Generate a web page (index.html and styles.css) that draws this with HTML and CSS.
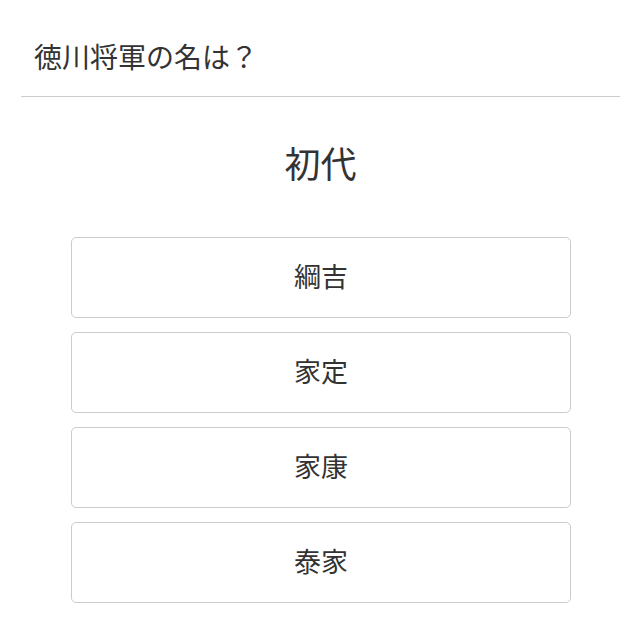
FILE: index.html
```html
<!DOCTYPE html>
<html lang="ja">
<head>
<meta charset="utf-8">
<title>徳川将軍</title>
<link rel="stylesheet" href="styles.css">
</head>
<body>
<div class="quiz">
  <div class="quiz-head">徳川将軍の名は？</div>
  <div class="quiz-question">初代</div>
  <div class="quiz-choices">
    <button class="choice">綱吉</button>
    <button class="choice">家定</button>
    <button class="choice">家康</button>
    <button class="choice">泰家</button>
  </div>
</div>
</body>
</html>
```

FILE: styles.css
```css
body {
  margin: 0;
  background: #fff;
  color: #333;
  font-family: "Noto Sans CJK JP", "Noto Sans", sans-serif;
}

.quiz {
  margin: 0 20px 0 21px;
}

.quiz-head {
  padding: 36px 0 20px 13px;
  font-size: 28px;
  line-height: 40px;
  border-bottom: 1px solid #ccc;
}

.quiz-question {
  margin-top: 40px;
  text-align: center;
  font-size: 36px;
  line-height: 50px;
}

.quiz-choices {
  display: flex;
  flex-direction: column;
  align-items: center;
  gap: 14px;
  margin-top: 50px;
  margin-right: -1px;
}

.choice {
  width: 500px;
  height: 81px;
  padding: 0 0 4px;
  background: #fff;
  border: 1px solid #ccc;
  border-radius: 5px;
  color: #333;
  font-family: inherit;
  font-size: 27px;
}
```
